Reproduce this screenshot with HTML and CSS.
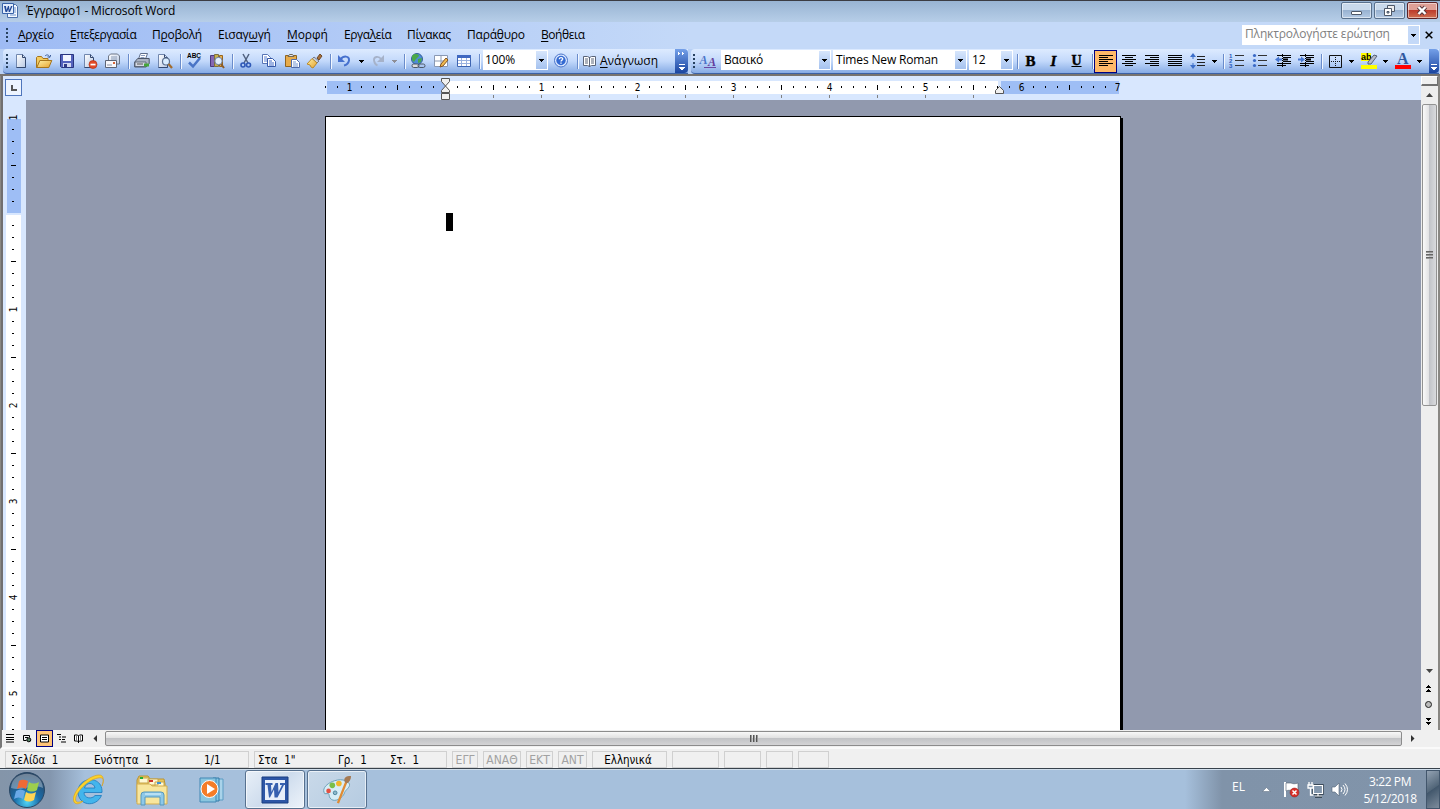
FILE: index.html
```html
<!DOCTYPE html>
<html lang="el">
<head>
<meta charset="utf-8">
<title>Έγγραφο1 - Microsoft Word</title>
<link rel="stylesheet" href="styles.css">
</head>
<body>
<svg class="defs" width="0" height="0">
  <defs>
    <linearGradient id="steel" x2="1" y2="1"><stop stop-color="#fff"/><stop offset="1" stop-color="#b9c9e4"/></linearGradient>
    <linearGradient id="gold" x2="1" y2="1"><stop stop-color="#fff3a8"/><stop offset="1" stop-color="#e5a12e"/></linearGradient>
    <symbol id="drop" viewBox="0 0 5 3"><path d="M0 0h5v1H4v1H3v1H2V2H1V1H0z"/></symbol>
    <symbol id="sheet" viewBox="0 0 16 16"><path d="M3.500 1.500h6l3 3v10h-9z" fill="url(#steel)" stroke="#7187ae"/><path d="M9.500 1.500v3h3M12.500 5v9.500h-9" fill="none" stroke="#33486f"/></symbol>
  </defs>
</svg>
<div class="window">
  <header class="titlebar">
    <svg class="app-icon" viewBox="0 0 17 17"><path d="M5.500 2.500h8l2 2v11h-10z" fill="#f5f9ff" stroke="#4a6fa8"/><path d="M11 6h3M11 8h3M11 10h3M8 13h6" stroke="#6f94cc"/><path d="M.5 1.500h11v10H.5z" fill="#e4eefc" stroke="#3963a8"/><path d="M2 4h2l.5 4 1.500-4h1l.5 4L9 4h1.500L8 10H6.700l-.4-3-1.200 3H3.500z" fill="#244b99"/></svg>
    <span class="title">Έγγραφο1 - Microsoft Word</span>
    <div class="caption-buttons">
      <span class="cap"><svg viewBox="0 0 28 15"><rect x="9.500" y="8.500" width="10" height="3" rx=".5" fill="#fff" stroke="#4e5868"/></svg></span>
      <span class="cap"><svg viewBox="0 0 28 15"><path d="M12.500 2.500h7v6h-7z" fill="#eee" stroke="#4e5868"/><path d="M9.500 5.500h7v7h-7z" fill="#fff" stroke="#4e5868"/><path d="M12 8.500h2v1.500h-2z" fill="#9eb7d4" stroke="#4e5868"/></svg></span>
      <span class="cap cap-close"><svg viewBox="0 0 28 15"><path d="M10.500 4l7 7M17.500 4l-7 7" stroke="#5a3a3e" stroke-width="4.400"/><path d="M10.500 4l7 7M17.500 4l-7 7" stroke="#fff" stroke-width="2.400"/></svg></span>
    </div>
  </header>

  <nav class="menubar">
    <i class="grip"></i>
    <span class="m m1"><u>Α</u>ρχείο</span><span class="m m2"><u>Ε</u>πεξεργασία</span><span class="m m3">Π<u>ρ</u>οβολή</span><span class="m m4">Εισαγ<u>ω</u>γή</span><span class="m m5"><u>Μ</u>ορφή</span><span class="m m6">Εργα<u>λ</u>εία</span><span class="m m7">Πί<u>ν</u>ακας</span><span class="m m8">Παρά<u>θ</u>υρο</span><span class="m m9"><u>Β</u>οήθεια</span>
    <div class="ask"><span>Πληκτρολογήστε ερώτηση</span><b class="ask-arrow"><svg class="drop"><use href="#drop"/></svg></b></div>
    <svg class="doc-close" viewBox="0 0 8 8"><path d="M.7.7l6.600 6.600M7.300.7L.7 7.300" stroke="#000" stroke-width="1.500"/></svg>
  </nav>

  <div class="toolbars">
    <div class="toolbar standard">
      <i class="grip"></i>
      <span class="btn"><svg viewBox="0 0 16 16"><use href="#sheet"/></svg></span>
      <span class="btn"><svg viewBox="0 0 16 16"><path d="M.5 14.500v-10l1-1h4l1.500 2h5v9z" fill="#f3cc60" stroke="#a5741c"/><path d="M.8 14.500l3-7h12l-3 7z" fill="url(#gold)" stroke="#a5741c"/><path d="M9 3c2-2 4-1 4.500 1M11.500 3.800l2.300.6.9-2.400" fill="none" stroke="#3d5f9b"/></svg></span>
      <span class="btn"><svg viewBox="0 0 16 16"><path d="M1.500 1.500h13v13h-12l-1-1z" fill="#5462bd" stroke="#29357f"/><path d="M4 2h8v6H4z" fill="#f2f5ff"/><path d="M4 10h8v4H4z" fill="#d3d8f0"/><path d="M5 11h3v3H5z" fill="#303a86"/></svg></span>
      <span class="btn"><svg viewBox="0 0 16 16"><use href="#sheet" x="-1"/><circle cx="11" cy="11.500" r="4" fill="#e24a28" stroke="#b83317" stroke-width=".7"/><path d="M8.500 10.700h5v1.700h-5z" fill="#fff"/></svg></span>
      <span class="btn"><svg viewBox="0 0 16 16"><path d="M3.500 7V3l2-2h7l2 2v8h-11z" fill="url(#steel)" stroke="#6c7687"/><path d="M6 4h6M6 6h6" stroke="#8b9bb5"/><path d="M.5 7.500h11v7H.5z" fill="#f7f7fb" stroke="#5d6475"/><path d="M2 12h5" stroke="#8c94a8"/><path d="M8 9h2v2H8z" fill="#d56437"/></svg></span>
      <i class="sep"></i>
      <span class="btn"><svg viewBox="0 0 16 16"><path d="M4.500 6l2-5.500h7l-2 5.500z" fill="#fff" stroke="#5d6d8b"/><path d="M7 2.500h4M6.500 4.500h4" stroke="#8a9cbe"/><path d="M.7 9l3-3.500h11.500v5l-3 3.500H.7z" fill="#aab3c3" stroke="#4c5668"/><path d="M1 9h11v4.500H1z" fill="#d5dae5" stroke="#4c5668" stroke-width=".8"/><path d="M3 11h6" stroke="#555"/><path d="M10 10.500h5v3h-5z" fill="#46a63a"/></svg></span>
      <span class="btn"><svg viewBox="0 0 16 16"><use href="#sheet" x="-2"/><circle cx="9" cy="8.500" r="3.500" fill="#d9ecff" stroke="#5c708f" stroke-width="1.200"/><path d="M11.500 11l3.500 4" stroke="#a36c2c" stroke-width="2.300"/></svg></span>
      <i class="sep"></i>
      <span class="btn"><svg viewBox="0 0 16 16"><text x="1" y="4.500" class="abc" textLength="14">ABC</text><path d="M3 9.500l4 4 7-8.500" fill="none" stroke="#4a74c6" stroke-width="2.500"/></svg></span>
      <span class="btn"><svg viewBox="0 0 16 16"><path d="M1.500 2.500h4v11h-4z" fill="#8468b4" stroke="#4b397d"/><path d="M5.500 1.500h4v12h-4z" fill="#c9b04a" stroke="#7e7040"/><path d="M10.500 2.500h3v11h-3z" fill="#e8b04d" stroke="#98651d"/><circle cx="9.500" cy="8" r="3.700" fill="#e2eefc" stroke="#6a7d9a"/><path d="M12 11l3 4" stroke="#8b5c29" stroke-width="2"/></svg></span>
      <i class="sep"></i>
      <span class="btn"><svg viewBox="0 0 16 16"><path d="M5 1l5 9M11 1L6 10" stroke="#50617f" stroke-width="1.500"/><circle cx="5" cy="12" r="2" fill="none" stroke="#2f59b7" stroke-width="1.600"/><circle cx="10.500" cy="12" r="2" fill="none" stroke="#2f59b7" stroke-width="1.600"/></svg></span>
      <span class="btn"><svg viewBox="0 0 16 16"><path d="M1.500 1.500h5l3 3v6h-8z" fill="#fff" stroke="#5875b5"/><path d="M3 4h3M3 6h4M3 8h4" stroke="#5a80d2"/><path d="M6.500 5.500h5l3 3v5h-8z" fill="#fff" stroke="#3558a8"/><path d="M8 8h3M8 10h5M8 12h5" stroke="#406ac7"/></svg></span>
      <span class="btn"><svg viewBox="0 0 16 16"><path d="M1.500 2.500h11v11h-11z" fill="#e7ab4a" stroke="#8e6320"/><path d="M4 3.500l1.500-2h3L10 3.500z" fill="#e5e5ec" stroke="#6e6858"/><path d="M7.500 6.500h5l3 3v5h-8z" fill="#fff" stroke="#506caa"/><path d="M9 9h3M9 11h5M9 13h5" stroke="#7394d1"/></svg></span>
      <span class="btn"><svg viewBox="0 0 16 16"><path d="M10 5l3-4 2 2-3 4z" fill="#a86f3a" stroke="#6e4a28"/><path d="M7 4l5 4-2 2-5-4z" fill="#c5ccda" stroke="#727a8d"/><path d="M5 5.500l5 4.500-4 5-2-1-1-2-3-1z" fill="url(#gold)" stroke="#b98a2a"/></svg></span>
      <i class="sep"></i>
      <span class="btn"><svg viewBox="0 0 16 16"><path d="M2 2v7h7z" fill="#4671ce"/><path d="M4.500 6.500c3-4 9-4 8.500 1-.5 2.500-2.500 4.500-5 5" fill="none" stroke="#4671ce" stroke-width="2"/></svg></span>
      <span class="arr"><svg class="drop"><use href="#drop"/></svg></span>
      <span class="btn shift"><svg viewBox="0 0 16 16"><path d="M14 2v7H7z" fill="#a6b2c9"/><path d="M11.500 6.500c-3-4-8-3-7.500 1 .3 2 1.500 4 3.500 5" fill="none" stroke="#a6b2c9" stroke-width="1.800"/></svg></span>
      <span class="arr off"><svg class="drop"><use href="#drop"/></svg></span>
      <i class="sep"></i>
      <span class="btn"><svg viewBox="0 0 16 16"><circle cx="7" cy="6" r="5.500" fill="#4e8cd8" stroke="#345f9b"/><path d="M2 3c2-3 7-2 7 0L6 6 4 9 2 7zM8 6l4-1-1 4-3 1z" fill="#4aa949"/><rect x="2" y="11" width="7" height="3.500" rx="1.700" fill="#ddd" stroke="#4c5868"/><rect x="8" y="11" width="7" height="3.500" rx="1.700" fill="none" stroke="#4c5868"/></svg></span>
      <span class="btn"><svg viewBox="0 0 16 16"><path d="M1.500 2.500h13v11h-13zM1.500 8h13M8 2.500v11" fill="#fff" stroke="#8a99b4"/><path d="M7 14l1-3 5-6 2 2-5 6z" fill="#efba50" stroke="#875523"/></svg></span>
      <span class="btn"><svg viewBox="0 0 16 16"><path d="M1.500 2.500h13v11h-13z" fill="#fff" stroke="#3e65b2"/><path d="M1 2h14v3H1z" fill="#3f68c1"/><path d="M2 7.500h12M2 10.500h12M5.500 5v8M10.500 5v8" stroke="#99b1df"/></svg></span>
      <i class="sep"></i>
      <span class="combo zoom"><span>100%</span><b><svg class="drop"><use href="#drop"/></svg></b></span>
      <span class="btn help"><svg viewBox="0 0 16 16"><circle cx="7" cy="7.500" r="6.500" fill="#dbe8ff" stroke="#4a74c9"/><circle cx="7" cy="7.500" r="4.700" fill="#346ad2"/><path d="M5.300 6.200c0-2.300 3.700-2 3.400 0-.2 1-1.700 1-1.700 2.300M7 9.500v1.300" fill="none" stroke="#fff" stroke-width="1.300"/></svg></span>
      <i class="sep"></i>
      <span class="reading"><svg viewBox="0 0 13 14"><path d="M.5 2.500h4l2 1 2-1h4v9h-4l-2 1-2-1h-4z" fill="#fff" stroke="#5a6478"/><path d="M6.500 3v10M2 5h3M2 7h3M2 9h3M8 5h3M8 7h3M8 9h3" stroke="#5a6478"/></svg><span><u>Α</u>νάγνωση</span></span>
      <span class="tail"><svg viewBox="0 0 8 23"><path d="M0 3h1v1h1v1H1v1H0zM4 3h1v1h1v1H5v1H4zM1 15h6v1H1zM1 18h6v1H6v1H5v1H3v-1H2v-1H1z" fill="#fff"/></svg></span>
    </div>

    <div class="toolbar formatting">
      <i class="grip"></i>
      <span class="btn styles"><svg viewBox="0 0 16 16"><path d="M3 14.500h12" stroke="#6b47a4"/><text x="-1.500" y="11" class="serif-a" fill="#4b75c9">A</text><text x="7" y="13" class="serif-a" fill="#613e9d">A</text></svg></span>
      <span class="combo style"><span>Βασικό</span><b><svg class="drop"><use href="#drop"/></svg></b></span>
      <span class="combo face"><span>Times New Roman</span><b><svg class="drop"><use href="#drop"/></svg></b></span>
      <span class="combo size"><span>12</span><b><svg class="drop"><use href="#drop"/></svg></b></span>
      <i class="sep s1"></i>
      <span class="btn letter">B</span><span class="btn letter it">I</span><span class="btn letter un">U</span>
      <i class="sep s2"></i>
      <span class="btn on"><svg viewBox="0 0 16 16"><path d="M1 2.500h14M1 4.500h9M1 6.500h14M1 8.500h9M1 10.500h14M1 12.500h9" stroke="#000"/></svg></span>
      <span class="btn"><svg viewBox="0 0 16 16"><path d="M1 2.500h14M4 4.500h8M1 6.500h14M4 8.500h8M1 10.500h14M4 12.500h8" stroke="#000"/></svg></span>
      <span class="btn"><svg viewBox="0 0 16 16"><path d="M1 2.500h14M6 4.500h9M1 6.500h14M6 8.500h9M1 10.500h14M6 12.500h9" stroke="#000"/></svg></span>
      <span class="btn"><svg viewBox="0 0 16 16"><path d="M1 2.500h14M1 4.500h14M1 6.500h14M1 8.500h14M1 10.500h14M1 12.500h14" stroke="#000"/></svg></span>
      <span class="btn"><svg viewBox="0 0 16 16"><path d="M3 2v4M3 10v4" stroke="#3d6fc9"/><path d="M0 4l3-4 3 4zM0 12l3 4 3-4z" fill="#3d6fc9"/><path d="M7 3.500h8M7 6.500h8M7 9.500h8M7 12.500h8" stroke="#222"/></svg></span>
      <span class="arr spacing"><svg class="drop"><use href="#drop"/></svg></span>
      <i class="sep"></i>
      <span class="btn"><svg viewBox="0 0 16 16"><path d="M6 2.500h9M6 7.500h9M6 12.500h9" stroke="#333"/><text x="0" y="4.500" class="tiny">1</text><text x="0" y="9.500" class="tiny">2</text><text x="0" y="14.500" class="tiny">3</text></svg></span>
      <span class="btn"><svg viewBox="0 0 16 16"><path d="M6 2.500h9M6 7.500h9M6 12.500h9" stroke="#333"/><g fill="#3969c7"><circle cx="2.500" cy="2.500" r="1.600"/><circle cx="2.500" cy="7.500" r="1.600"/><circle cx="2.500" cy="12.500" r="1.600"/></g></svg></span>
      <span class="btn"><svg viewBox="0 0 16 16"><path d="M2 2.500h14M8 4.500h8M8 8.500h8M2 10.500h14M2 12.500h9" stroke="#000"/><path d="M8 6.500h5" stroke="#000" stroke-width="2"/><path d="M7.500 1v14" stroke="#000" stroke-dasharray="1 1"/><path d="M0 6.500l4-3v2h3v2H4v2z" fill="#4777d2"/></svg></span>
      <span class="btn"><svg viewBox="0 0 16 16"><path d="M2 2.500h14M8 4.500h8M8 8.500h8M2 10.500h14M2 12.500h9" stroke="#000"/><path d="M8 6.500h5" stroke="#000" stroke-width="2"/><path d="M7.500 1v14" stroke="#000" stroke-dasharray="1 1"/><path d="M7 6.500l-4-3v2H0v2h3v2z" fill="#4777d2"/></svg></span>
      <i class="sep"></i>
      <span class="btn"><svg viewBox="0 0 16 16"><path d="M2.500 2.500h12v12h-12z" fill="none" stroke="#111"/><path d="M8.500 4v9M4 8.500h9" stroke="#111" stroke-dasharray="1 1"/></svg></span>
      <span class="arr narrow"><svg class="drop"><use href="#drop"/></svg></span>
      <span class="btn"><svg viewBox="0 0 16 16"><path d="M0 0h10v8H0zM0 12h16v4H0z" fill="#ff0"/><text x="0" y="7" class="ab">ab</text><path d="M7 9l6-7 3 1-6 8H7z" fill="#b8bdc9" stroke="#536078"/></svg></span>
      <span class="arr narrow"><svg class="drop"><use href="#drop"/></svg></span>
      <span class="btn"><svg viewBox="0 0 16 16"><text x="2" y="11" class="font-a">A</text><path d="M0 12h16v4H0z" fill="red"/></svg></span>
      <span class="arr narrow"><svg class="drop"><use href="#drop"/></svg></span>
      <span class="tail end"><svg viewBox="0 0 8 23"><path d="M1 15h6v1H1zM1 18h6v1H6v1H5v1H3v-1H2v-1H1z" fill="#fff"/></svg></span>
    </div>
  </div>

  <main class="work">
    <section class="pane">
      <div class="hruler">
        <span class="tabstop"><svg viewBox="0 0 6 6"><path d="M1 0v5h5" fill="none" stroke="#555" stroke-width="2"/></svg></span>
        <svg class="hscale" viewBox="325 76 800 24">
          <defs>
            <pattern id="hp" x="445" y="76" width="96" height="24" patternUnits="userSpaceOnUse"><path d="M12.500 10v2M24.500 10v2M36.500 10v2M60.500 10v2M72.500 10v2M84.500 10v2M48.500 9v5" stroke="#000"/></pattern>
            <pattern id="hg" x="445" y="76" width="48" height="24" patternUnits="userSpaceOnUse"><path d="M.5 19v3" stroke="#808080"/></pattern>
          </defs>
          <path d="M327 81h118v13H327zM1001 81h118v13h-118z" fill="#9ebef5"/><path d="M445 81h553v13H445z" fill="#fff"/>
          <path d="M325 76h792v24H325z" fill="url(#hp)"/><path d="M450 76h530v24H450z" fill="url(#hg)"/>
          <g class="num"><text x="349.500" y="91">1</text><text x="541.500" y="91">1</text><text x="637.500" y="91">2</text><text x="733.500" y="91">3</text><text x="829.500" y="91">4</text><text x="925.500" y="91">5</text><text x="1021.500" y="91">6</text><text x="1117.500" y="91">7</text></g>
          <path d="M441.500 78.500h8v3l-4 4.500 4 4.500v2h-8v-2l4-4.500-4-4.500zM441.500 93.500h8v6h-8zM995.500 93.500v-3l4-4 4 4v3z" fill="#f0f0f0" stroke="#555"/>
        </svg>
      </div>
      <div class="canvas">
        <div class="vruler">
          <svg viewBox="3 100 23 630">
            <defs><pattern id="vp" x="0" y="213" width="26" height="96" patternUnits="userSpaceOnUse"><path d="M12 12.500h2M12 24.500h2M12 36.500h2M12 60.500h2M12 72.500h2M12 84.500h2M11 48.500h5" stroke="#000"/></pattern></defs>
            <path d="M7 119h14v94H7z" fill="#9ebef5"/><path d="M6 215h15v515H6z" fill="#fff"/><path d="M3 118h20v612H3z" fill="url(#vp)"/>
            <g class="num"><text transform="translate(17 117.500) rotate(-90)">1</text><text transform="translate(17 309.500) rotate(-90)">1</text><text transform="translate(17 405.500) rotate(-90)">2</text><text transform="translate(17 501.500) rotate(-90)">3</text><text transform="translate(17 597.500) rotate(-90)">4</text><text transform="translate(17 693.500) rotate(-90)">5</text></g>
          </svg>
        </div>
        <article class="paper"><div class="caret"></div></article>
      </div>
    </section>
    <aside class="vscroll">
      <i class="split"></i>
      <svg class="v-up" viewBox="0 0 17 18"><path d="M5 11l3.500-4 3.500 4z" fill="#444"/></svg>
      <div class="v-thumb"><i></i><i></i><i></i></div>
      <div class="v-track"></div>
      <svg class="v-bottom" viewBox="0 0 17 68"><path d="M5 7h7l-3.500 4z" fill="#444"/><path d="M7 23h1v1h1v1h1v1H5v-1h1v-1h1zM7 27h1v1h1v1h1v1H5v-1h1v-1h1zM5 56h5v1H9v1H8v1H7v-1H6v-1H5zM5 60h5v1H9v1H8v1H7v-1H6v-1H5z"/><circle cx="7.500" cy="42.500" r="3" fill="#bbb" stroke="#222"/></svg>
    </aside>
  </main>

  <div class="hscroll">
    <div class="views">
      <span><svg viewBox="0 0 9 9"><path d="M0 .5h8M0 3.500h8M0 5.500h8M0 8h8" stroke="#000"/></svg></span>
      <span><svg viewBox="0 0 9 9"><path d="M.5 1.500h6v2M.5 1.500v5h3M2 3.500h3" fill="none" stroke="#000"/><circle cx="5.800" cy="5.800" r="2" fill="#568064" stroke="#000"/></svg></span>
      <span class="active"><svg viewBox="0 0 9 9"><path d="M.5 1h8v7h-8z" fill="#fff" stroke="#000"/><path d="M2 3.500h5M2 5.500h5" stroke="#000"/></svg></span>
      <span><svg viewBox="0 0 9 9"><path d="M0 .5h4M2 3h2M5 3h4M2 5.500h2M5 5.500h3M4 8h5" stroke="#000"/></svg></span>
      <span><svg viewBox="0 0 9 9"><path d="M.5 1h3l1 1 1-1h3v6h-3l-1 1-1-1h-3zM4.500 2v7M2 3h1M2 5h1M6 3h1M6 5h1" fill="#fff" stroke="#000"/></svg></span>
    </div>
    <svg class="h-left" viewBox="0 0 18 17"><path d="M10 5v7L6.500 8.500z" fill="#333"/></svg>
    <div class="h-thumb"><i></i><i></i><i></i></div>
    <svg class="h-right" viewBox="0 0 20 17"><path d="M9 5v7l3.500-3.500z" fill="#333"/></svg>
  </div>

  <footer class="status">
    <div class="cell c1"><span>Σελίδα&nbsp; 1</span><span>Ενότητα&nbsp; 1</span><span>1/1</span></div>
    <div class="cell c2"><span>Στα&nbsp; 1"</span><span>Γρ.&nbsp; 1</span><span>Στ.&nbsp; 1</span></div>
    <div class="cell dim c3">ΕΓΓ</div><div class="cell dim c4">ΑΝΑΘ</div><div class="cell dim c5">ΕΚΤ</div><div class="cell dim c6">ΑΝΤ</div><div class="cell c7">Ελληνικά</div><div class="cell c8"></div><div class="cell c9"></div><div class="cell c10"></div><div class="cell c11"></div>
  </footer>

  <div class="taskbar">
    <svg class="start" viewBox="0 0 38 38">
      <defs><radialGradient id="orb" cx=".5" cy=".85" r=".8"><stop stop-color="#4fd3f5"/><stop offset=".45" stop-color="#1a6ca8"/><stop offset="1" stop-color="#2b4766"/></radialGradient></defs>
      <circle cx="19" cy="19" r="17.500" fill="url(#orb)" stroke="#294765"/><path d="M3 17C4-2 34-2 35 17 24 12 14 21 3 17z" fill="#fff" opacity=".33"/>
      <path d="M11 10c3-2 6-1 9 0l-2 8c-3-2-6-2-9 0z" fill="#ee6a35"/><path d="M21 11c3 2 6 2 10 0l-2 8c-3 2-7 2-10 0z" fill="#9dce4d"/><path d="M8 20c3-2 6-2 9 0l-2 8c-3-2-6-2-9 0z" fill="#6aa9e7"/><path d="M18 21c3 2 6 2 10 0l-2 8c-4 2-7 2-10 0z" fill="#fed454"/>
    </svg>
    <svg class="ie" viewBox="0 0 32 32"><path d="M29 18.500H11c0 6 8 7 11 3h6.500C23 34 5 32 5 17.500 5 2 30 1 29 18.500zM11.500 14H22c-1-6-9-6-10.500 0z" fill="#43b5ec" stroke="#1b78bd" stroke-width=".8"/><path d="M29 12c3-7 1-9-4-8C13 6 0 22 3 27c1 2 4 1 7 0-3 3-7 4-9 1C-3 19 15 1 26 1c5 0 5 5 3 11z" fill="#fbd22c" stroke="#d99d15" stroke-width=".6"/></svg>
    <svg class="folder" viewBox="0 0 34 32"><path d="M2 6l2-4h9l2 3h14l1 5v18H2z" fill="#e9c95f" stroke="#b99334"/><path d="M4 4h10v5H4zM13 5h10v6H13zM20 8h9v5h-9z" fill="#fff8d4" stroke="#c6a54b"/><path d="M5 3h3v2H5z" fill="#23ad35"/><path d="M14 6h4v2h-4z" fill="#ce3429"/><path d="M22 8h4v2h-4z" fill="#3e92d4"/><path d="M2 10h13l2 2h15v18H2z" fill="#f8e69d" stroke="#d3ae50"/><path d="M6 31V21q0-3 3-3h17q3 0 3 3v10h-4v-8H10v8z" fill="#8ec8e8" stroke="#5698be"/><path d="M10 20h16" stroke="#e4f7ff"/></svg>
    <svg class="player" viewBox="0 0 30 28"><path d="M18 3h6v21h-6z" fill="#a9d3ea" stroke="#5b9cc4"/><path d="M14 2h6v23h-6z" fill="#83c5e4" stroke="#357ba6"/><path d="M1 2h16v24H1z" fill="#8ac6df" stroke="#4388b5"/><circle cx="10.500" cy="13" r="8.500" fill="#f47d28" stroke="#fff"/><path d="M8 8l8 5-8 5z" fill="#fff"/></svg>
    <div class="task word-task"><svg viewBox="0 0 28 28"><path d="M1 1h26v26H1z" fill="#2d56a6" stroke="#193d80"/><path d="M4 4h20v20H4z" fill="#e8effa"/><path d="M4.500 7h7v2h-1.500l.5 7 4-9h2.500l.5 9 3.500-7h-2V7h5v2h-1l-6.500 12.500h-3l-.5-8-4 8H8L6.500 9h-2z" fill="#3760af"/></svg></div>
    <div class="task paint-task"><svg viewBox="0 0 34 32"><path d="M4 20c-6-8 12-18 22-14 10 5 0 9-1 13-2 6-10 10-14 7-5-4 1-7-7-6z" fill="#d7edf6" stroke="#679db5"/><circle cx="8" cy="17" r="2.500" fill="#e45042"/><circle cx="12" cy="11" r="3" fill="#79bf48"/><circle cx="19" cy="9" r="3" fill="#f1b62c"/><circle cx="15" cy="19" r="2" fill="#8db9cc" stroke="#4b829a"/><path d="M18 30L27 7" stroke="#df8b35" stroke-width="2.500"/><path d="M25 7c-1-4 1-6 7-6 0 4-2 7-5 8z" fill="#a57a54"/></svg></div>
    <div class="tray">
      <span class="lang">EL</span>
      <svg class="tray-up" viewBox="0 0 9 5"><path d="M.5 4.500L4.500.5l4 4z" fill="#fff" stroke="#56677b" stroke-width=".5"/></svg>
      <svg class="flag" viewBox="0 0 17 17"><path d="M2 1v15" stroke="#fff" stroke-width="2"/><path d="M3 2h5c2 1 4 1 7 0v8H9c-2-1-4-1-6 0z" fill="#fff" stroke="#4d5b6c" stroke-width=".6"/><circle cx="11.500" cy="11.500" r="4.500" fill="#d82f28" stroke="#8a2524" stroke-width=".5"/><path d="M9.500 9.500l4 4M13.500 9.500l-4 4" stroke="#fff" stroke-width="1.500"/></svg>
      <svg class="net" viewBox="0 0 17 17"><path d="M6.500 4.500h9v8h-9zM8 15.500h7M11 12.500v3" fill="#6f8197" stroke="#263442" stroke-width="2.500"/><path d="M6.500 4.500h9v8h-9zM8 15h7M11 12.500v3" fill="#8397ad" stroke="#fff" stroke-width="1.200"/><path d="M2 1v3M5 1v3M1 4h5v3H1zM3.500 7v7h3" fill="none" stroke="#fff" stroke-width="1.300"/></svg>
      <svg class="sound" viewBox="0 0 17 15"><path d="M1 5h3l4-4v13l-4-4H1z" fill="#fff" stroke="#506175" stroke-width=".6"/><path d="M10 5q2 2.500 0 5M12 3q4 4.500 0 9M14 1.500q5 6 0 12" fill="none" stroke="#fff"/></svg>
      <div class="clock"><span>3:22 PM</span><span>5/12/2018</span></div>
      <i class="show-desktop"></i>
    </div>
  </div>
</div>
</body>
</html>
```

FILE: styles.css
```css
* { box-sizing: border-box; }
body { margin: 0; width: 1440px; height: 809px; overflow: hidden; font: 12px/16px "Open Sans", "Noto Sans", sans-serif; color: #000; }
.defs { position: absolute; }
svg { display: block; flex: none; }
.window { display: flex; flex-direction: column; height: 809px; background: #f0f0f0; }

/* Title bar */
.titlebar { display: flex; height: 22px; border-top: 1px solid #3b3c43; background: linear-gradient(#98b4d3, #b7cee8); padding-left: 2px; }
.app-icon { width: 17px; height: 17px; margin-top: 1px; }
.title { margin: 2px 0 0 7px; letter-spacing: -.19px; white-space: nowrap; }
.caption-buttons { display: flex; gap: 2px; margin: 1px 2px 0 auto; }
.cap { width: 31px; height: 17px; border: 1px solid #59708c; border-radius: 2px; background: linear-gradient(#c9d9eb 45%, #98b2d1 50%, #b4cae4); box-shadow: inset 0 0 0 1px #ffffff80; }
.cap svg { width: 28px; height: 15px; }
.cap-close { border-color: #5c2326; background: linear-gradient(#dfa096 45%, #bd3c2c 50%, #cf6f51); }

/* Menu bar */
.menubar { display: flex; align-items: center; height: 27px; background: linear-gradient(90deg, #9ebbf4, #c4d9f8 48%); }
.grip { width: 2px; height: 15px; flex: none; background: repeating-linear-gradient(#27415f 0 2px, transparent 2px 4px); }
.menubar .grip { margin: 0 10px 0 6px; }
.m { white-space: nowrap; flex: none; letter-spacing: -.43px; margin-top: -1px; }
.m u, .reading u { text-underline-offset: 2px; text-decoration-thickness: 1px; }
.m1 { width: 52px; } .m2 { width: 82px; } .m3 { width: 66px; letter-spacing: -.25px; } .m4 { width: 69px; letter-spacing: -.2px; } .m5 { width: 57px; letter-spacing: -.1px; } .m6 { width: 63px; } .m7 { width: 60px; letter-spacing: -.35px; } .m8 { width: 74px; letter-spacing: -.2px; } .m9 { width: 50px; }
.ask { display: flex; width: 178px; height: 20px; margin: -1px 5px 0 auto; padding: 1px 1px 1px 3px; background: #fff; color: #808080; justify-content: space-between; white-space: nowrap; letter-spacing: -.14px; }
.ask-arrow { display: flex; width: 11px; align-items: center; justify-content: center; background: #c4d9f8; }
.doc-close { width: 8px; height: 8px; margin: -1px 7px 0 0; }
.drop { width: 5px; height: 3px; }

/* Toolbars */
.toolbars { display: flex; height: 27px; gap: 3px; padding: 0 0 2px 3px; background: #b8d0f5; border-bottom: 2px solid #77736f; }
.toolbar { display: flex; align-items: center; height: 25px; flex: none; background: linear-gradient(#ddebff, #c3d9fb 50%, #86abe5); border-bottom: 1px solid #3b61a5; border-radius: 4px 0 0 4px; }
.standard { width: 685px; }
.formatting { width: 748px; }
.standard .grip { margin: 0 1px 0 3px; }
.formatting .grip { margin: 0 2px; }
.btn { display: flex; width: 23px; height: 23px; flex: none; align-items: center; justify-content: center; }
.btn svg { width: 16px; height: 16px; overflow: visible; }
.sep { width: 6px; height: 15px; flex: none; background: linear-gradient(90deg, transparent 4px, #6a8ccb 4px 5px, #f1f7ff 5px); }
.arr { display: flex; width: 12px; flex: none; justify-content: center; }
.shift { margin-left: -1px; }
.arr.off { width: 11px; fill: #8e8e96; }
.abc { font: 700 6.500px "Liberation Sans", sans-serif; }
.combo { display: flex; flex: none; height: 20px; margin: -2px 2px 0 0; padding: 1px 1px 1px 3px; background: #fff; justify-content: space-between; white-space: nowrap; }
.combo b { display: flex; width: 11px; align-items: center; justify-content: center; background: linear-gradient(#d7e6fc, #a5c2ef); }
.combo span { line-height: 17px; letter-spacing: -.15px; }
.combo.zoom { width: 65px; margin-left: 2px; padding-left: 2px; }
.reading { display: flex; width: 83px; margin-left: 4px; gap: 4px; align-items: center; white-space: nowrap; }
.reading svg { width: 13px; height: 14px; }
.tail { display: flex; width: 13px; height: 24px; flex: none; margin-left: auto; justify-content: center; background: linear-gradient(#74a0e9, #1b45a0); border-radius: 0 4px 4px 0; }
.tail svg { width: 8px; height: 23px; }
.tail.end { width: 10px; }
.serif-a { font: italic 700 12px "Liberation Serif", serif; }
.combo.style { width: 110px; margin-left: 1px; }
.face { width: 134px; }
.size { width: 44px; }
.s1 { width: 4px; background: linear-gradient(90deg, transparent 2px, #6a8ccb 2px 3px, #f1f7ff 3px); }
.letter { font: 700 15px/20px "Liberation Serif", serif; -webkit-text-stroke: .4px #000; }
.it { font-style: italic; }
.un { text-decoration: underline; font-size: 14px; }
.s2 { width: 6px; background: linear-gradient(90deg, transparent 4px, #6a8ccb 4px 5px, #f1f7ff 5px); }
.on { background: #ffb969; border: 1px solid #000080; }
.arr.spacing { width: 10px; }
.arr.narrow { width: 11px; }
.tiny { font: 700 6px "Liberation Sans", sans-serif; fill: #2859ba; }
.ab { font: 700 9px "Liberation Sans", sans-serif; }
.font-a { font: 700 16px "Liberation Serif", serif; fill: #31599f; }

/* Document area */
.work { display: flex; height: 654px; padding-left: 1px; background: #898783; }
.pane { width: 1420px; border-left: 2px solid #716f70; background: #d8e7fe; }
.hruler { display: flex; height: 24px; }
.tabstop { width: 17px; height: 17px; margin: 3px 0 0 2px; border: 1px solid #4e75bc; background: #edf4ff; padding: 5px; }
.tabstop svg { width: 6px; height: 6px; }
.hscale { width: 800px; height: 24px; margin-left: 303px; overflow: visible; }
.num { font: 10px "DejaVu Sans Condensed", "DejaVu Sans", sans-serif; text-anchor: middle; }
.vruler { width: 23px; }
.vruler svg { width: 23px; height: 630px; }
.canvas { display: flex; height: 630px; background: linear-gradient(90deg, #d8e7fe 23px, #9199ae 23px); }
.paper { width: 796px; height: 614px; margin: 16px 0 0 299px; border: 1px solid #000; border-bottom: 0; background: #fff; box-shadow: 2px 2px #000; padding: 96px 0 0 120px; }
.caret { width: 7px; height: 18px; background: #000; }
.vscroll { display: flex; flex-direction: column; width: 17px; height: 654px; background: #eeeeee; }
.split { height: 10px; border: 1px solid; border-color: #fff #707070 #707070 #fff; border-bottom-width: 2px; background: #f0f0f0; }
.v-up { width: 17px; height: 18px; }
.v-thumb { display: flex; flex-direction: column; gap: 1px; align-items: center; justify-content: center; width: 15px; height: 302px; margin-left: 1px; border: 1px solid #929292; border-radius: 2px; background: linear-gradient(90deg, #fafafa, #e2e2e4 45%, #c2c4c9 50%, #d9dadd); }
.v-thumb i { width: 7px; height: 2px; background: #666; border-bottom: 1px solid #999; }
.v-track { flex: 1; }
.v-bottom { width: 17px; height: 68px; }
.hscroll { display: flex; height: 19px; border-left: 2px solid #777; border-bottom: 2px solid #fafafa; background: #f0f0f0; }
.views { display: flex; }
.views span { display: flex; width: 17px; height: 17px; align-items: center; justify-content: center; }
.views svg { width: 9px; height: 9px; }
.views .active { background: #ffc477; border: 1px solid #000080; }
.h-left { width: 18px; height: 17px; }
.h-thumb { display: flex; align-items: center; justify-content: center; gap: 1px; width: 1297px; height: 15px; margin-top: 1px; border: 1px solid #8c8c8c; border-radius: 2px; background: linear-gradient(#f8f8f8, #e1e1e1 45%, #c2c3c6 50%, #d4d4d6); }
.h-thumb i { width: 2px; height: 7px; background: #555; border-right: 1px solid #999; }
.h-right { width: 20px; height: 17px; }

/* Status bar */
.status { display: flex; height: 20px; padding: 2px 0 0 5px; gap: 5px; font: 11.500px/16px "DejaVu Sans Condensed", "DejaVu Sans", sans-serif; border-bottom: 1px solid #38424c; }
.cell { height: 17px; border: 1px solid #d0d0d0; text-align: center; white-space: nowrap; flex: none; }
.c1 { display: grid; grid-template-columns: 83px 110px auto; width: 244px; padding-left: 5px; text-align: left; }
.c1 span:first-child { letter-spacing: -.1px; }
.c2 { display: grid; grid-template-columns: 80px 52px auto; width: 193px; padding-left: 3px; text-align: left; }
.dim { color: #a2a2a2; font-size: 12px; }
.c3 { width: 26px; } .c4 { width: 38px; } .c5 { width: 27px; } .c6 { width: 29px; } .c7 { width: 75px; padding-right: 3px; } .c8 { width: 47px; } .c9 { width: 37px; } .c10 { width: 27px; } .c11 { width: 31px; }

/* Taskbar */
.taskbar { display: flex; height: 40px; align-items: center; border-top: 1px solid #d1dfec; background: linear-gradient(90deg, #8495a9 0, #8396ae 50px, #a6c0dc 85px, #a6c0dc 1185px, #8093a9 1222px, #8194aa); }
.start { width: 38px; height: 38px; margin-left: 8px; }
.ie { width: 32px; height: 32px; margin-left: 27px; }
.folder { width: 34px; height: 32px; margin-left: 30px; }
.player { width: 30px; height: 28px; margin-left: 30px; }
.task { display: flex; height: 39px; align-items: center; justify-content: center; border: 1px solid #57718f; border-radius: 3px; box-shadow: inset 0 0 0 1px #ffffffa0; }
.word-task { width: 60px; margin-left: 16px; background: linear-gradient(135deg, #e8f0f8, #cedced 50%, #edf3fa); }
.word-task svg { width: 28px; height: 28px; }
.paint-task { width: 60px; margin-left: 2px; background: linear-gradient(135deg, #c9d9e9, #b5cbe1); }
.paint-task svg { width: 32px; height: 30px; }
.tray { display: flex; align-items: center; height: 39px; margin-left: auto; color: #fff; }
.lang { margin-right: 17px; margin-top: -5px; }
.tray-up { width: 9px; height: 5px; margin-right: 12px; }
.flag { width: 17px; height: 17px; margin-right: 7px; }
.net { width: 17px; height: 17px; margin-right: 7px; }
.sound { width: 17px; height: 15px; margin-right: 14px; }
.clock { display: flex; flex-direction: column; width: 56px; text-align: center; line-height: 17px; letter-spacing: -.4px; }
.show-desktop { width: 14px; height: 39px; margin-left: 8px; border: 1px solid #42566c; background: linear-gradient(145deg, #93a2b3, #526679 48%, #42576c 50%, #7d8c9c); }
```
